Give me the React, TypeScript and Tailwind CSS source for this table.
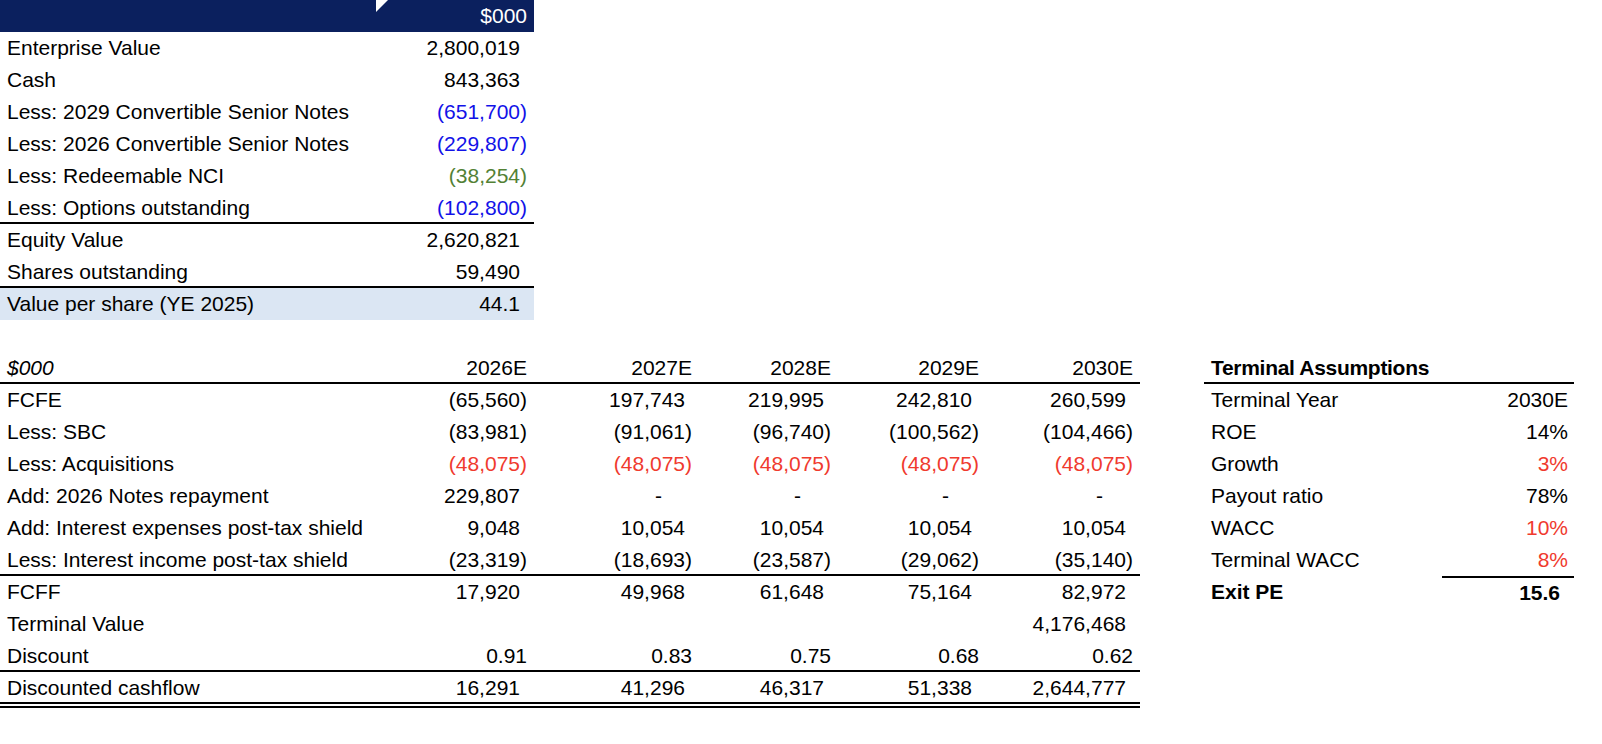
import React from "react";

const RED = "text-[#f03a2e]";
const BLUE = "text-[#1212e8]";
const GREEN = "text-[#538135]";

type Cell = { v: string; c?: string };

function padClass(v: string) {
  if (v === "-") return "pr-[37px]";
  if (v.startsWith("(") || v.includes("E") || /^0\.\d+$/.test(v)) return "pr-[7px]";
  return "pr-[14px]";
}

function NumCell({ v, c, w }: { v: string; c?: string; w: string }) {
  return (
    <div className={`${w} shrink-0 text-right whitespace-nowrap ${padClass(v)} ${c ?? ""}`}>{v}</div>
  );
}

const topRows: { label: string; v: string; c?: string; border?: boolean; hl?: boolean }[] = [
  { label: "Enterprise Value", v: "2,800,019" },
  { label: "Cash", v: "843,363" },
  { label: "Less: 2029 Convertible Senior Notes", v: "(651,700)", c: BLUE },
  { label: "Less: 2026 Convertible Senior Notes", v: "(229,807)", c: BLUE },
  { label: "Less: Redeemable NCI", v: "(38,254)", c: GREEN },
  { label: "Less: Options outstanding", v: "(102,800)", c: BLUE, border: true },
  { label: "Equity Value", v: "2,620,821" },
  { label: "Shares outstanding", v: "59,490", border: true },
  { label: "Value per share (YE 2025)", v: "44.1", hl: true },
];

const colW = ["w-[158px]", "w-[165px]", "w-[139px]", "w-[148px]", "w-[154px]"];

const acq: Cell = { v: "(48,075)", c: RED };

const bottomRows: { label: string; cells: Cell[]; border?: "single" | "double" }[] = [
  { label: "FCFE", cells: [{ v: "(65,560)" }, { v: "197,743" }, { v: "219,995" }, { v: "242,810" }, { v: "260,599" }] },
  { label: "Less: SBC", cells: [{ v: "(83,981)" }, { v: "(91,061)" }, { v: "(96,740)" }, { v: "(100,562)" }, { v: "(104,466)" }] },
  { label: "Less: Acquisitions", cells: [acq, acq, acq, acq, acq] },
  { label: "Add: 2026 Notes repayment", cells: [{ v: "229,807" }, { v: "-" }, { v: "-" }, { v: "-" }, { v: "-" }] },
  { label: "Add: Interest expenses post-tax shield", cells: [{ v: "9,048" }, { v: "10,054" }, { v: "10,054" }, { v: "10,054" }, { v: "10,054" }] },
  { label: "Less: Interest income post-tax shield", cells: [{ v: "(23,319)" }, { v: "(18,693)" }, { v: "(23,587)" }, { v: "(29,062)" }, { v: "(35,140)" }], border: "single" },
  { label: "FCFF", cells: [{ v: "17,920" }, { v: "49,968" }, { v: "61,648" }, { v: "75,164" }, { v: "82,972" }] },
  { label: "Terminal Value", cells: [{ v: "" }, { v: "" }, { v: "" }, { v: "" }, { v: "4,176,468" }] },
  { label: "Discount", cells: [{ v: "0.91" }, { v: "0.83" }, { v: "0.75" }, { v: "0.68" }, { v: "0.62" }], border: "single" },
  { label: "Discounted cashflow", cells: [{ v: "16,291" }, { v: "41,296" }, { v: "46,317" }, { v: "51,338" }, { v: "2,644,777" }], border: "double" },
];

const termRows: { label: string; v: string; red?: boolean }[] = [
  { label: "Terminal Year", v: "2030E" },
  { label: "ROE", v: "14%" },
  { label: "Growth", v: "3%", red: true },
  { label: "Payout ratio", v: "78%" },
  { label: "WACC", v: "10%", red: true },
  { label: "Terminal WACC", v: "8%", red: true },
];

function rowClass(b?: "single" | "double") {
  if (b === "single") return "h-[32px] border-b-2 border-black";
  if (b === "double") return "h-[36px] border-b-[6px] border-double border-black";
  return "h-[32px]";
}

export default function App() {
  return (
    <div
      className="w-[1602px] h-[744px] bg-white text-black text-[21px] leading-[32px] overflow-hidden"
      style={{ fontFamily: '"Liberation Sans", Arial, sans-serif' }}
    >
      {/* Top table */}
      <div className="w-[534px]">
        <div className="flex h-[32px] bg-[#0b205e] text-white">
          <div className="w-[376px] shrink-0" />
          <div className="flex-1 relative text-right pr-[7px]">
            <svg className="absolute left-0 top-0" width="12" height="12" viewBox="0 0 12 12">
              <polygon points="0,0 12,0 0,12" fill="#ffffff" />
            </svg>
            $000
          </div>
        </div>
        {topRows.map((r) => (
          <div
            key={r.label}
            className={`flex h-[32px] ${r.hl ? "bg-[#dbe6f3]" : ""} ${r.border ? "border-b-2 border-black" : ""}`}
          >
            <div className="w-[376px] shrink-0 pl-[7px] whitespace-nowrap">{r.label}</div>
            <NumCell v={r.v} c={r.c} w="w-[158px]" />
          </div>
        ))}
      </div>

      <div className="h-[32px]" />

      {/* Bottom section */}
      <div className="flex">
        <div className="w-[1140px] shrink-0">
          <div className="flex h-[32px] border-b-2 border-black">
            <div className="w-[376px] shrink-0 pl-[7px] italic">$000</div>
            {["2026E", "2027E", "2028E", "2029E", "2030E"].map((y, i) => (
              <div key={y} className={`${colW[i]} shrink-0 text-right pr-[7px]`}>{y}</div>
            ))}
          </div>
          {bottomRows.map((r) => (
            <div key={r.label} className={`flex ${rowClass(r.border)}`}>
              <div className="w-[376px] shrink-0 pl-[7px] whitespace-nowrap">{r.label}</div>
              {r.cells.map((c, i) => (
                <NumCell key={i} v={c.v} c={c.c} w={colW[i]} />
              ))}
            </div>
          ))}
        </div>

        <div className="w-[64px] shrink-0" />

        <div className="w-[370px] shrink-0">
          <div className="flex h-[32px] border-b-2 border-black">
            <div className="pl-[7px] font-bold tracking-[-0.3px] whitespace-nowrap">Terminal Assumptions</div>
          </div>
          {termRows.map((r) => (
            <div key={r.label} className="flex h-[32px]">
              <div className="w-[238px] shrink-0 pl-[7px] whitespace-nowrap">{r.label}</div>
              <div className={`w-[132px] shrink-0 text-right pr-[6px] ${r.red ? RED : ""}`}>{r.v}</div>
            </div>
          ))}
          <div className="flex h-[32px] font-bold">
            <div className="w-[238px] shrink-0 pl-[7px]">Exit PE</div>
            <div className="w-[132px] shrink-0 text-right pr-[14px] border-t-2 border-black leading-[30px]">15.6</div>
          </div>
        </div>
      </div>
    </div>
  );
}
